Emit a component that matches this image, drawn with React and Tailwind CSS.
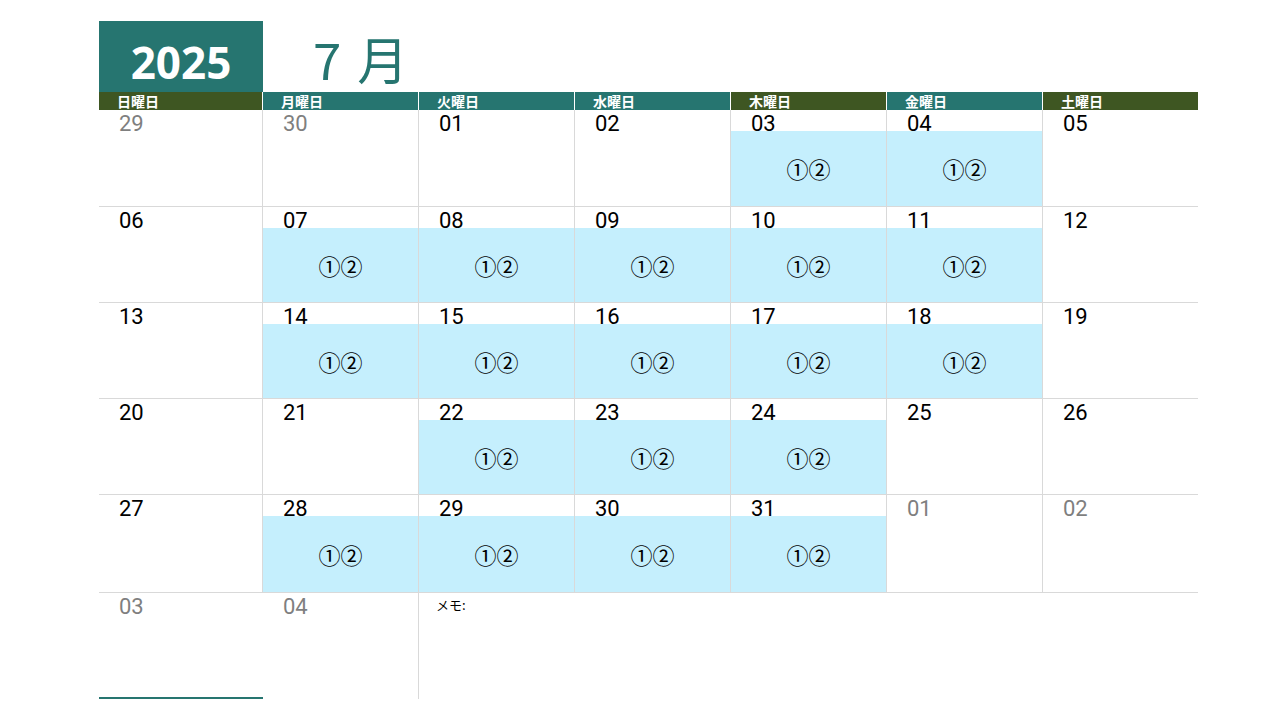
const days = ['日曜日', '月曜日', '火曜日', '水曜日', '木曜日', '金曜日', '土曜日'];
const headColors = ['bg-[#3e5622]', 'bg-[#267570]', 'bg-[#267570]', 'bg-[#267570]', 'bg-[#3e5622]', 'bg-[#267570]', 'bg-[#3e5622]'];

// [label, otherMonth, marked]
const weeks = [
  [['29', true], ['30', true], ['01'], ['02'], ['03', false, true], ['04', false, true], ['05']],
  [['06'], ['07', false, true], ['08', false, true], ['09', false, true], ['10', false, true], ['11', false, true], ['12']],
  [['13'], ['14', false, true], ['15', false, true], ['16', false, true], ['17', false, true], ['18', false, true], ['19']],
  [['20'], ['21'], ['22', false, true], ['23', false, true], ['24', false, true], ['25'], ['26']],
  [['27'], ['28', false, true], ['29', false, true], ['30', false, true], ['31', false, true], ['01', true], ['02', true]],
];
const rowHeights = ['h-[97px]', 'h-[96px]', 'h-[96px]', 'h-[96px]', 'h-[98px]'];

function DayCell({ label, other, marked, last, h }) {
  return (
    <div className={`${h} flex flex-col border-b border-[#d9d9d9] ${last ? '' : 'border-r'}`}>
      <div className={`h-[21px] shrink-0 pl-[20px] pt-[3px] text-[22px] leading-[21px] font-['Roboto',sans-serif] ${other ? 'text-[#7f7f7f]' : 'text-black'}`}>{label}</div>
      {marked && (
        <div className="flex-1 bg-[#c5effd] flex items-center justify-center text-[22px] text-black font-['Noto_Sans_CJK_JP',sans-serif]">
          ①②
        </div>
      )}
    </div>
  );
}

export default function App() {
  return (
    <div className="w-[1280px] h-[720px] bg-white font-['Noto_Sans','Noto_Sans_CJK_JP',sans-serif]">
      <div className="ml-[99px] pt-[21px] w-[1099px]">
        {/* Title */}
        <div className="flex h-[71px]">
          <div className="w-[164px] bg-[#267570] flex items-end justify-center">
            <span className="text-white font-bold text-[44px] leading-[60px] font-['Open_Sans',sans-serif]">2025</span>
          </div>
          <div className="pl-[50px] flex items-center text-[#267570] text-[51px] leading-none font-['Noto_Sans_CJK_JP',sans-serif] pt-[4px]">
            <span>7</span>
            <span className="ml-[16px]">月</span>
          </div>
        </div>

        {/* Weekday header */}
        <div className="grid grid-cols-[164px_repeat(5,156px)_155px] h-[18px]">
          {days.map((d, i) => (
            <div key={d} className={`${headColors[i]} ${i < 6 ? 'border-r border-white' : ''} text-white font-bold text-[14px] leading-[18px] pl-[18px] font-['Noto_Sans_CJK_JP',sans-serif]`}>
              {d}
            </div>
          ))}
        </div>

        {/* Weeks */}
        {weeks.map((w, wi) => (
          <div key={wi} className="grid grid-cols-[164px_repeat(5,156px)_155px]">
            {w.map(([label, other, marked], i) => (
              <DayCell key={i} h={rowHeights[wi]} label={label} other={other} marked={marked} last={i === 6} />
            ))}
          </div>
        ))}

        {/* Last row + memo */}
        <div className="grid grid-cols-[164px_repeat(5,156px)_155px] h-[106px]">
          <div className="border-b-2 border-[#267570] pl-[20px] pt-[3px] text-[22px] leading-[21px] font-['Roboto',sans-serif] text-[#7f7f7f]">03</div>
          <div className="border-r border-[#d9d9d9] pl-[20px] pt-[3px] text-[22px] leading-[21px] font-['Roboto',sans-serif] text-[#7f7f7f]">04</div>
          <div className="col-span-5 pl-[17px] pt-[4px] text-[13px] leading-[16px] text-black font-['Noto_Sans_CJK_JP',sans-serif]">メモ:</div>
        </div>
      </div>
    </div>
  );
}
